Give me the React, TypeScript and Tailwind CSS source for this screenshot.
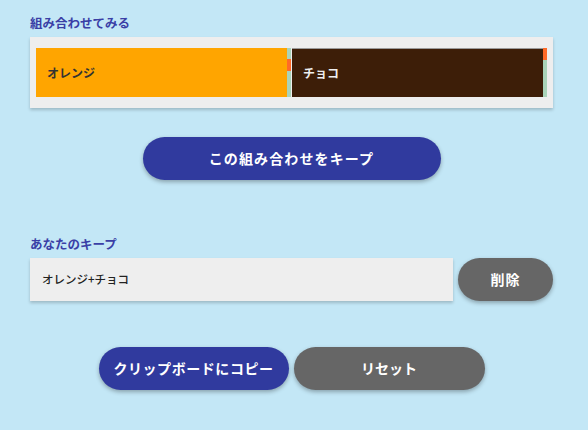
import React from 'react'

const font = "font-['Noto_Sans_CJK_JP','Noto_Sans',sans-serif]"

function Gutter({ handleTop }: { handleTop: boolean }) {
  return (
    <div className="relative h-full w-[4px] bg-[#a9d3b9]">
      <div
        className={
          handleTop
            ? 'absolute left-0 top-0 h-[12px] w-[4px] bg-[#ff6a28]'
            : 'absolute left-0 top-[11px] h-[12px] w-[4px] bg-[#ff6a28]'
        }
      />
    </div>
  )
}

export default function App() {
  return (
    <div className={`h-[430px] w-[588px] bg-[#c3e7f6] pt-[14px] ${font}`}>
      <div className="ml-[30px] w-[523px]">
        <h2 className="text-[12.5px] font-bold leading-[17px] text-[#3a3fa6]">組み合わせてみる</h2>

        <div className="mt-[6px] flex h-[71px] items-stretch bg-[#eeeeee] px-[6px] py-[11px] shadow-[0_2px_3px_rgba(0,0,0,0.2)]">
          <div className="flex w-[251px] items-center bg-[#ffa500] pl-[11px] text-[12px] font-bold text-[#333333]">
            オレンジ
          </div>
          <Gutter handleTop={false} />
          <div className="w-[1.5px]" />
          <div className="flex w-[251.5px] items-center border-t border-[#9a9a9a] bg-[#3d1e08] pl-[11px] text-[12px] font-bold text-[#eeeeee]">
            チョコ
          </div>
          <Gutter handleTop={true} />
        </div>

        <div className="mt-[29px] flex justify-center">
          <button className="h-[43px] w-[298px] rounded-full bg-[#303a9e] text-[14px] font-bold tracking-[0.08em] text-white shadow-[0_2px_4px_rgba(0,0,0,0.3)]">
            この組み合わせをキープ
          </button>
        </div>

        <h2 className="mt-[55px] text-[12.5px] font-bold leading-[17px] text-[#3a3fa6]">あなたのキープ</h2>

        <div className="mt-[6px] flex items-center gap-[5px]">
          <div className="flex h-[43px] w-[423px] items-center bg-[#eeeeee] pl-[12px] text-[11.5px] font-medium text-[#222222] shadow-[0_2px_3px_rgba(0,0,0,0.2)]">
            オレンジ+チョコ
          </div>
          <button className="h-[43px] w-[95px] rounded-full bg-[#666666] text-[14px] font-bold tracking-[0.08em] text-white shadow-[0_2px_4px_rgba(0,0,0,0.3)]">
            削除
          </button>
        </div>

        <div className="mt-[46px] flex justify-center gap-[5px]">
          <button className="h-[43px] w-[190px] rounded-full bg-[#303a9e] text-[14px] font-bold tracking-[0.04em] text-white shadow-[0_2px_4px_rgba(0,0,0,0.3)]">
            クリップボードにコピー
          </button>
          <button className="h-[43px] w-[191px] rounded-full bg-[#666666] text-[14px] font-bold text-white shadow-[0_2px_4px_rgba(0,0,0,0.3)]">
            リセット
          </button>
        </div>
      </div>
    </div>
  )
}
